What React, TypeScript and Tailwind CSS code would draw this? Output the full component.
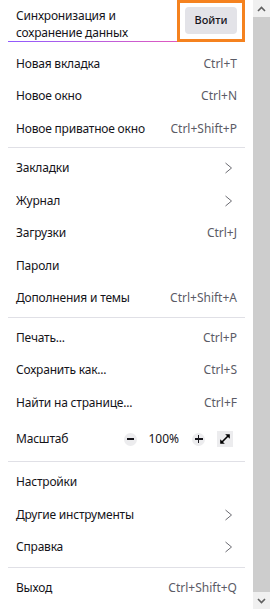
import React from "react";

const font = { fontFamily: '"Noto Sans", "Open Sans", sans-serif' };

function Chevron() {
  return (
    <svg width="16" height="16" viewBox="0 0 16 16" className="shrink-0">
      <path d="M4.5 3 L10.5 8 L4.5 13" fill="none" stroke="#6b6b72" strokeWidth="1" />
    </svg>
  );
}

type Item = { label: string; sc?: string; sub?: boolean };

function Row({ item }: { item: Item }) {
  return (
    <div className="flex h-[32.5px] items-center justify-between px-2 text-[12px] text-[#15141a]">
      <span className="tracking-[-0.2px]">{item.label}</span>
      {item.sc ? <span className="text-[#5b5b66]">{item.sc}</span> : null}
      {item.sub ? <Chevron /> : null}
    </div>
  );
}

function Sep() {
  return <div className="mt-[2px] mb-[4px] h-px bg-[#e0e0e6]" />;
}

const g1: Item[] = [
  { label: "Новая вкладка", sc: "Ctrl+T" },
  { label: "Новое окно", sc: "Ctrl+N" },
  { label: "Новое приватное окно", sc: "Ctrl+Shift+P" },
];
const g2: Item[] = [
  { label: "Закладки", sub: true },
  { label: "Журнал", sub: true },
  { label: "Загрузки", sc: "Ctrl+J" },
  { label: "Пароли" },
  { label: "Дополнения и темы", sc: "Ctrl+Shift+A" },
];
const g3: Item[] = [
  { label: "Печать...", sc: "Ctrl+P" },
  { label: "Сохранить как...", sc: "Ctrl+S" },
  { label: "Найти на странице...", sc: "Ctrl+F" },
];
const g4: Item[] = [
  { label: "Настройки" },
  { label: "Другие инструменты", sub: true },
  { label: "Справка", sub: true },
];

export default function App() {
  return (
    <div className="flex h-[609px] w-[270px] overflow-hidden bg-white" style={font}>
      <div className="relative w-[253px]">
        <div className="mx-2">
          <div className="flex h-[41px] items-center justify-between pl-2 pr-2">
            <div className="mt-[6px] text-[12px] leading-[17px] tracking-[-0.2px] text-[#15141a]">
              <div>Синхронизация и</div>
              <div>сохранение данных</div>
            </div>
            <button className="h-[27px] w-[52px] rounded-[4px] bg-[#e3e3e8] text-[11px] font-medium text-[#15141a]">
              Войти
            </button>
          </div>
          <div className="h-px bg-gradient-to-r from-[#9059ff] to-[#ff4aa2]" />
          <div className="pt-[5.5px]">
            {g1.map((i) => (
              <Row key={i.label} item={i} />
            ))}
          </div>
          <Sep />
          {g2.map((i) => (
            <Row key={i.label} item={i} />
          ))}
          <Sep />
          {g3.map((i) => (
            <Row key={i.label} item={i} />
          ))}
          <div className="flex h-[40px] items-center justify-between px-2 text-[12px] text-[#15141a]">
            <span className="tracking-[-0.2px]">Масштаб</span>
            <div className="mr-1 flex items-center">
              <div className="flex h-[13px] w-[13px] items-center justify-center rounded-full bg-[#ececee]">
                <div className="h-[1.5px] w-[7px] bg-[#15141a]" />
              </div>
              <span className="ml-[11px] mr-[13px]">100%</span>
              <div className="relative flex h-[13px] w-[13px] items-center justify-center rounded-full bg-[#ececee]">
                <div className="absolute h-[1.5px] w-[8px] bg-[#15141a]" />
                <div className="absolute h-[8px] w-[1.5px] bg-[#15141a]" />
              </div>
              <div className="ml-[12px] flex h-[16px] w-[16px] items-center justify-center bg-[#ececee]">
                <svg width="12" height="12" viewBox="0 0 12 12">
                  <path d="M2.5 9.5 L9.5 2.5" stroke="#000" strokeWidth="1.6" />
                  <path d="M1.2 6.2 L1.2 10.8 L5.8 10.8 Z" fill="#000" />
                  <path d="M6.2 1.2 L10.8 1.2 L10.8 5.8 Z" fill="#000" />
                </svg>
              </div>
            </div>
          </div>
          <Sep />
          {g4.map((i) => (
            <Row key={i.label} item={i} />
          ))}
          <div className="mt-[3px] mb-[4px] h-px bg-[#e0e0e6]" />
          <Row item={{ label: "Выход", sc: "Ctrl+Shift+Q" }} />
        </div>
        <div className="pointer-events-none absolute left-[177px] top-0 h-[42px] w-[68px] border-[3px] border-[#f5821f]" />
      </div>
      <div className="flex w-[17px] flex-col bg-[#f0f0f0]">
        <div className="flex h-[17px] items-center justify-center">
          <svg width="9" height="6" viewBox="0 0 9 6">
            <path d="M1 5 L4.5 1.5 L8 5" fill="none" stroke="#606060" strokeWidth="1.6" />
          </svg>
        </div>
        <div className="flex-1 bg-[#cdcdcd]" />
        <div className="flex h-[17px] items-center justify-center">
          <svg width="9" height="6" viewBox="0 0 9 6">
            <path d="M1 1 L4.5 4.5 L8 1" fill="none" stroke="#606060" strokeWidth="1.6" />
          </svg>
        </div>
      </div>
    </div>
  );
}
